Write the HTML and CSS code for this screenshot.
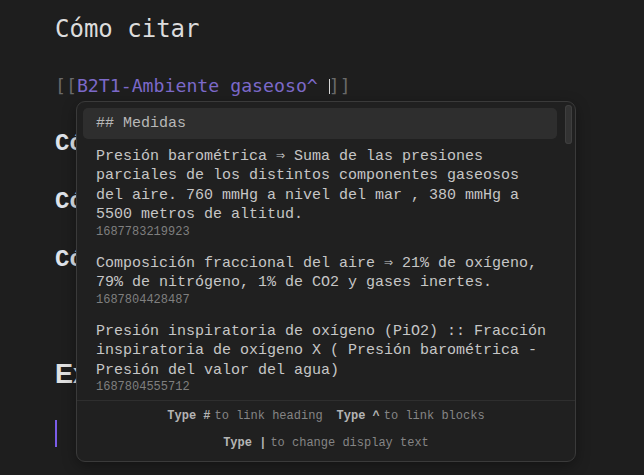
FILE: index.html
```html
<!DOCTYPE html>
<html lang="es">
<head>
<meta charset="utf-8">
<title>Cómo citar</title>
<link rel="stylesheet" href="styles.css">
</head>
<body>
<main class="editor">
  <h1 class="title">Cómo citar</h1>
  <p class="link-line"><span class="bracket">[[</span><span class="link">B2T1-Ambiente gaseoso^ </span><span class="caret"></span><span class="bracket">]]</span></p>
  <h3 class="sub">Cómo</h3>
  <h3 class="sub">Cómo</h3>
  <h3 class="sub">Cómo</h3>
  <h2 class="ex">Explicación</h2>
  <div class="cursor"></div>

  <div class="suggest">
    <div class="suggest-list">
      <div class="item heading-item">## Medidas</div>
      <div class="item">
        <div class="item-text">Presión barométrica ⇒ Suma de las presiones parciales de los distintos componentes gaseosos del aire. 760 mmHg a nivel del mar , 380 mmHg a 5500 metros de altitud.</div>
        <div class="item-id">1687783219923</div>
      </div>
      <div class="item">
        <div class="item-text">Composición fraccional del aire ⇒ 21% de oxígeno, 79% de nitrógeno, 1% de CO2 y gases inertes.</div>
        <div class="item-id">1687804428487</div>
      </div>
      <div class="item">
        <div class="item-text">Presión inspiratoria de oxígeno (PiO2) :: Fracción inspiratoria de oxígeno X ( Presión barométrica - Presión del valor del agua)</div>
        <div class="item-id">1687804555712</div>
      </div>
      <div class="scroll-thumb"></div>
    </div>
    <div class="suggest-footer">
      <div class="instr-row">
        <span class="instr"><b class="cmd">Type #</b><span class="hint">to link heading</span></span>
        <span class="instr"><b class="cmd">Type ^</b><span class="hint">to link blocks</span></span>
      </div>
      <div class="instr-row">
        <span class="instr"><b class="cmd">Type |</b><span class="hint">to change display text</span></span>
      </div>
    </div>
  </div>
</main>
</body>
</html>
```
FILE: styles.css
```css
html, body {
  margin: 0;
  padding: 0;
  background: #1e1e1e;
  height: 100%;
  overflow: hidden;
}

.editor {
  position: relative;
  padding: 12px 0 0 55px;
  height: 100%;
  box-sizing: border-box;
}

.title {
  margin: 0;
  font-family: "DejaVu Sans Mono", monospace;
  font-size: 24px;
  font-weight: normal;
  line-height: 34px;
  color: #dcdcdc;
  white-space: nowrap;
}

.link-line {
  margin: 26px 0 0 0;
  font-family: "DejaVu Sans Mono", monospace;
  font-size: 18.2px;
  line-height: 28px;
  white-space: pre;
}

.bracket { color: #6a6a6a; }
.link { color: #7c69c9; }
.caret {
  display: inline-block;
  width: 1px;
  height: 15px;
  background: #d8d8d8;
  vertical-align: -2px;
  margin-right: -1px;
}

.sub {
  margin: 0;
  width: 21px;
  overflow: hidden;
  font-family: "Liberation Mono", monospace;
  font-size: 24px;
  font-weight: bold;
  line-height: 58px;
  color: #dfe3ea;
  white-space: nowrap;
}
.sub:first-of-type { margin-top: 15px; }

.ex {
  margin: 65px 0 0 0;
  width: 21px;
  overflow: hidden;
  font-family: "Liberation Sans", sans-serif;
  font-size: 27px;
  font-weight: bold;
  line-height: 40px;
  color: #e2e2e2;
  white-space: nowrap;
}

.cursor {
  margin-top: 26px;
  width: 2px;
  height: 27px;
  background: #7b5ce8;
}

/* Suggestion popup overlay */
.suggest {
  position: absolute;
  left: 76px;
  top: 101px;
  width: 500px;
  height: 361px;
  box-sizing: border-box;
  background: #202020;
  border: 1px solid #3a3a3a;
  border-radius: 9px;
  display: flex;
  flex-direction: column;
  overflow: hidden;
  box-shadow: 0 4px 14px rgba(0, 0, 0, 0.35);
}

.suggest-list {
  position: relative;
  flex: 1;
  padding: 6px 18px 0 6px;
  overflow: hidden;
  font-family: "Liberation Mono", monospace;
  font-size: 15px;
}

.item {
  padding: 7.5px 8px 7.5px 13px;
  color: #c6c6c6;
}

.heading-item {
  background: #2e2e2e;
  border-radius: 5px;
  height: 31px;
  box-sizing: border-box;
  padding: 0 13px;
  line-height: 31px;
  color: #b8b8b8;
}

.item-text {
  line-height: 19.5px;
}

.item-id {
  font-size: 12px;
  line-height: 14px;
  color: #7f7f7f;
}

.scroll-thumb {
  position: absolute;
  right: 3px;
  top: 3px;
  width: 7px;
  height: 39px;
  border-radius: 4px;
  background: #333333;
  box-shadow: inset 0 0 0 1px #3f3f3f;
}

.suggest-footer {
  border-top: 1px solid #2e2e2e;
  padding: 2px 0 4px;
  font-family: "Liberation Mono", monospace;
  font-size: 12px;
  line-height: 27px;
}

.instr-row {
  display: flex;
  justify-content: center;
  gap: 14px;
}

.cmd {
  font-weight: bold;
  color: #b4b4b4;
  margin-right: 4px;
}

.hint {
  color: #858585;
}
```
